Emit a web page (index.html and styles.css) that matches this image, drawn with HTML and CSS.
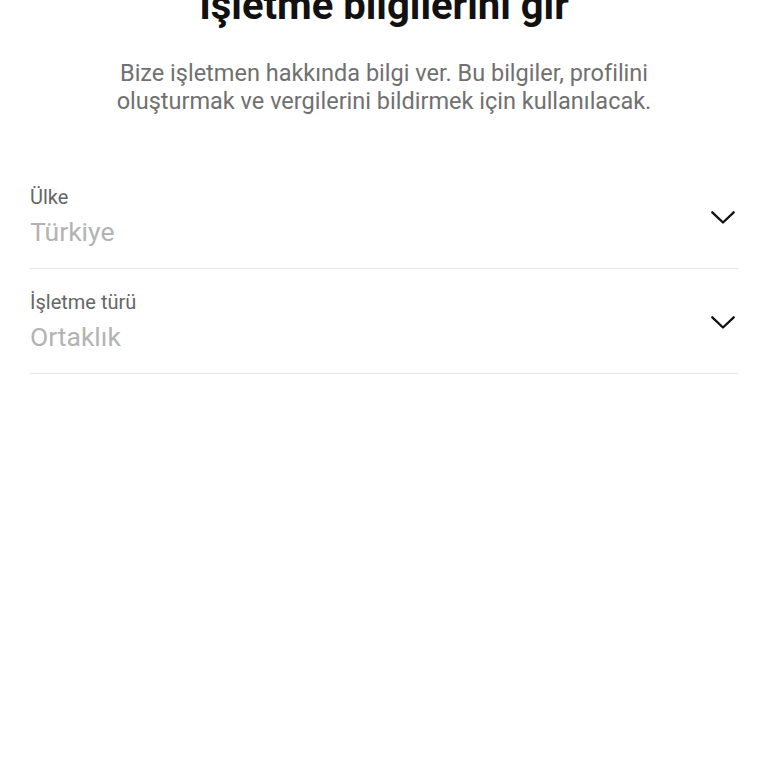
FILE: index.html
```html
<!DOCTYPE html>
<html lang="tr">
<head>
  <meta charset="UTF-8">
  <title>İşletme bilgileri</title>
  <link rel="stylesheet" href="styles.css">
</head>
<body>

<div class="page">
  <h1 class="title">İşletme bilgilerini gir</h1>
  <p class="intro">Bize işletmen hakkında bilgi ver. Bu bilgiler, profilini oluşturmak ve vergilerini bildirmek için kullanılacak.</p>

  <!-- select fields -->
  <div class="field">
    <div class="fieldText">
      <div class="fieldLabel">Ülke</div>
      <div class="fieldValue">Türkiye</div>
    </div>
    <svg class="chevron" viewBox="0 0 24 13" width="24" height="13">
      <path d="M1.3 1.3 L12 11.5 L22.7 1.3" fill="none" stroke="#111" stroke-width="2.3" stroke-linecap="round" stroke-linejoin="round"/>
    </svg>
  </div>

  <div class="field">
    <div class="fieldText">
      <div class="fieldLabel">İşletme türü</div>
      <div class="fieldValue">Ortaklık</div>
    </div>
    <svg class="chevron" viewBox="0 0 24 13" width="24" height="13">
      <path d="M1.3 1.3 L12 11.5 L22.7 1.3" fill="none" stroke="#111" stroke-width="2.3" stroke-linecap="round" stroke-linejoin="round"/>
    </svg>
  </div>
</div>

</body>
</html>
```

FILE: styles.css
```css
body {
  margin: 0;
  font-family: Roboto, "Liberation Sans", sans-serif;
  background: #fff;
  color: #111;
}

.page { padding: 0 30px; }

.title {
  margin: -18px 0 0;
  font-size: 40px;
  line-height: 48px;
  font-weight: 700;
  text-align: center;
  color: #111;
}

.intro {
  margin: 29px auto 0;
  max-width: 580px;
  font-size: 23.5px;
  line-height: 28px;
  text-align: center;
  color: #707070;
}

.field {
  display: flex;
  align-items: center;
  justify-content: space-between;
  border-bottom: 1px solid #e6e6e6;
  padding: 0 3px 0 0;
  height: 105px;
  box-sizing: border-box;
}

.field:first-of-type { margin-top: 49px; }

.fieldLabel {
  font-size: 20px;
  line-height: 24px;
  color: #666;
}

.fieldValue {
  margin-top: 8px;
  font-size: 26.5px;
  line-height: 30px;
  color: #b3b3b3;
}

.chevron { flex-shrink: 0; margin-top: 3px; }
```
